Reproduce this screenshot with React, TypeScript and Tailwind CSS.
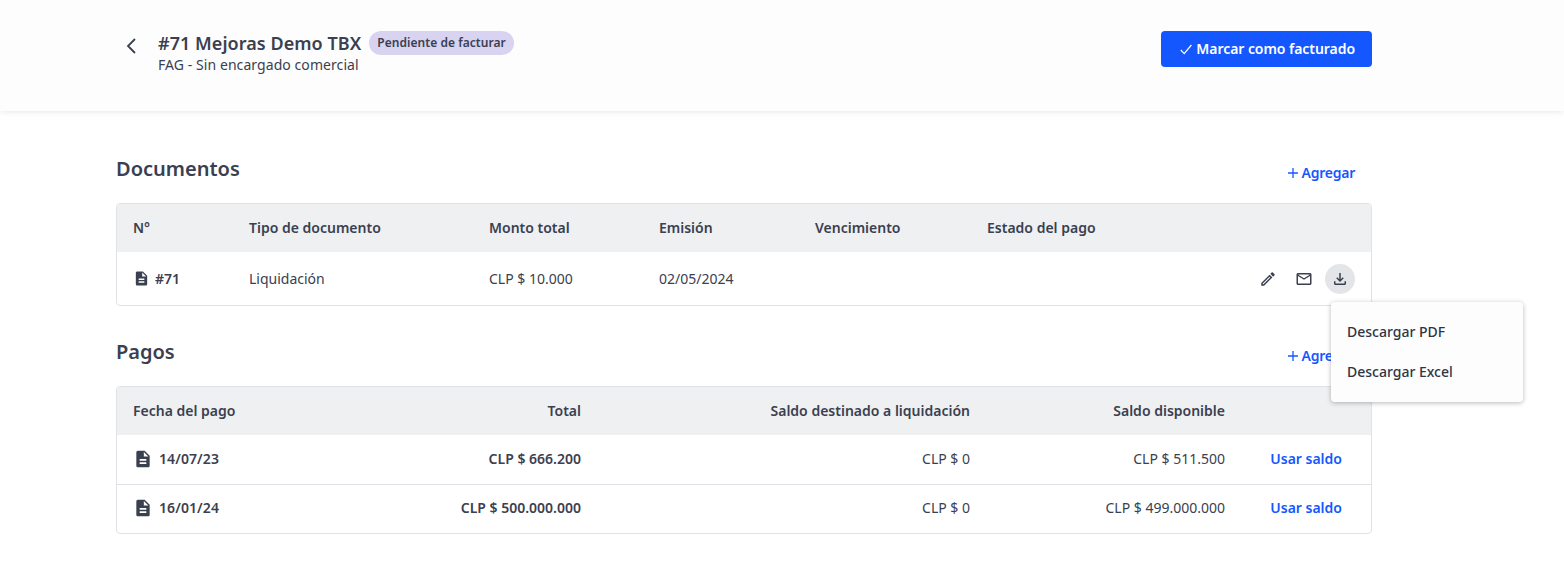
const font = "font-['Noto_Sans',sans-serif]";

const docIcon = "M14 2H6c-1.1 0-1.99.9-1.99 2L4 20c0 1.1.89 2 1.99 2H18c1.1 0 2-.9 2-2V8l-6-6zm2 16H8v-2h8v2zm0-4H8v-2h8v2zm-3-5V3.5L18.5 9H13z";

function Icon({ d, className }: { d: string; className: string }) {
  return (
    <svg viewBox="0 0 24 24" fill="currentColor" className={className}>
      <path d={d} />
    </svg>
  );
}

function AddButton() {
  return (
    <button className="flex items-center gap-[3px] text-sm font-semibold tracking-[-0.25px] text-[#1557ff] mr-[17px]">
      <svg viewBox="0 0 12 12" className="w-[12px] h-[12px]" fill="none" stroke="currentColor" strokeWidth="1.3">
        <path d="M6 1v10M1 6h10" />
      </svg>
      Agregar
    </button>
  );
}

const pagos = [
  { fecha: "14/07/23", total: "CLP $ 666.200", destinado: "CLP $ 0", disponible: "CLP $ 511.500" },
  { fecha: "16/01/24", total: "CLP $ 500.000.000", destinado: "CLP $ 0", disponible: "CLP $ 499.000.000" },
];

export default function App() {
  return (
    <div className={`${font} min-h-[575px] bg-white text-[#3a4050] overflow-hidden`}>
      <header className="h-[111px] bg-[#fdfdfd] shadow-[0_1px_6px_rgba(0,0,0,0.09)] pl-[116px] pr-[192px] pt-[31px] flex justify-between items-start">
        <div className="flex items-start">
          <svg viewBox="0 0 12 18" className="w-[12px] h-[18px] mt-[6px] ml-[9px] mr-[21px]" fill="none" stroke="#3a4050" strokeWidth="1.8">
            <path d="M10 2 L3 9 L10 16" />
          </svg>
          <div>
            <div className="flex items-center gap-[8px] h-[24px]">
              <h1 className="text-lg font-semibold leading-[24px] tracking-[0.05px]">#71 Mejoras Demo TBX</h1>
              <span className="h-[24px] rounded-full bg-[#d8d3f0] px-[8px] text-xs font-semibold leading-[24px] tracking-[0.05px]">Pendiente de facturar</span>
            </div>
            <p className="text-sm leading-[20px] tracking-[0.07px]">FAG - Sin encargado comercial</p>
          </div>
        </div>
        <button className="h-[36px] w-[211px] rounded-[4px] bg-[#1557ff] text-white text-sm font-semibold tracking-[-0.05px] flex items-center justify-end gap-[4px] pr-[17px]">
          <svg viewBox="0 0 12 11" className="w-[12px] h-[11px]" fill="none" stroke="currentColor" strokeWidth="1.2">
            <path d="M0.8 6 L4.2 9.6 L11.4 1" />
          </svg>
          Marcar como facturado
        </button>
      </header>

      <main className="pl-[116px] pr-[192px]">
        <section className="pt-[44px]">
          <div className="flex justify-between items-start h-[48px]">
            <h2 className="text-xl font-semibold leading-[27px]">Documentos</h2>
            <div className="pt-[8px]"><AddButton /></div>
          </div>
          <div className="rounded-[4px] border border-[#e0e2e7] text-sm">
            <div className="grid grid-cols-[116px_240px_170px_156px_172px_1fr] items-center h-[48px] px-[16px] bg-[#eff0f2] font-semibold rounded-t-[4px]">
              <span>N°</span>
              <span>Tipo de documento</span>
              <span>Monto total</span>
              <span>Emisión</span>
              <span>Vencimiento</span>
              <span>Estado del pago</span>
            </div>
            <div className="grid grid-cols-[116px_240px_170px_156px_172px_1fr] items-center h-[53px] px-[16px]">
              <span className="flex items-center gap-[5px] font-semibold">
                <Icon d={docIcon} className="w-[17px] h-[17px]" />
                #71
              </span>
              <span>Liquidación</span>
              <span>CLP $ 10.000</span>
              <span>02/05/2024</span>
              <span />
              <div className="flex items-center justify-end gap-[6px]">
                <button className="w-[30px] h-[30px] flex items-center justify-center">
                  <Icon className="w-[18px] h-[18px]" d="M3 17.25V21h3.75L17.81 9.94l-3.75-3.75L3 17.25zM5.92 19H5v-.92l9.06-9.06.92.92L5.92 19zM20.71 5.63l-2.34-2.34c-.2-.2-.45-.29-.71-.29s-.51.1-.7.29l-1.83 1.83 3.75 3.75 1.83-1.83c.39-.39.39-1.02 0-1.41z" />
                </button>
                <button className="w-[30px] h-[30px] flex items-center justify-center">
                  <Icon className="w-[18px] h-[18px]" d="M22 6c0-1.1-.9-2-2-2H4c-1.1 0-2 .9-2 2v12c0 1.1.9 2 2 2h16c1.1 0 2-.9 2-2V6zm-2 0l-8 5-8-5h16zm0 12H4V8l8 5 8-5v10z" />
                </button>
                <div className="relative">
                  <button className="w-[30px] h-[30px] rounded-full bg-[#e4e5e8] flex items-center justify-center">
                    <Icon className="w-[18px] h-[18px]" d="M18 15v3H6v-3H4v3c0 1.1.9 2 2 2h12c1.1 0 2-.9 2-2v-3h-2zm-1-4l-1.41-1.41L13 12.17V4h-2v8.17L8.41 9.59 7 11l5 5 5-5z" />
                  </button>
                  <div className="absolute left-[6px] top-[38px] z-10 w-[192px] h-[100px] rounded-[4px] bg-[#fdfdfd] shadow-[0_1px_5px_rgba(0,0,0,0.28)] py-[10px] font-medium text-[#2f3445]">
                    <div className="h-[40px] px-[16px] flex items-center">Descargar PDF</div>
                    <div className="h-[40px] px-[16px] flex items-center">Descargar Excel</div>
                  </div>
                </div>
              </div>
            </div>
          </div>
        </section>

        <section className="pt-[32px]">
          <div className="flex justify-between items-start h-[48px]">
            <h2 className="text-xl font-semibold leading-[27px]">Pagos</h2>
            <div className="pt-[8px]"><AddButton /></div>
          </div>
          <div className="rounded-[4px] border border-[#e0e2e7] text-sm">
            <div className="grid grid-cols-[149px_299px_389px_255px_1fr] items-center h-[48px] px-[16px] bg-[#eff0f2] font-semibold rounded-t-[4px]">
              <span>Fecha del pago</span>
              <span className="text-right">Total</span>
              <span className="text-right">Saldo destinado a liquidación</span>
              <span className="text-right">Saldo disponible</span>
              <span />
            </div>
            {pagos.map((p, i) => (
              <div
                key={p.fecha}
                className={`grid grid-cols-[149px_299px_389px_255px_1fr] items-center h-[49px] px-[16px] pb-[2px] ${i > 0 ? "border-t border-[#e0e2e7]" : ""}`}
              >
                <span className="flex items-center gap-[6px] font-semibold tracking-[0.1px]">
                  <Icon d={docIcon} className="w-[20px] h-[20px]" />
                  {p.fecha}
                </span>
                <span className="text-right font-semibold">{p.total}</span>
                <span className="text-right">{p.destinado}</span>
                <span className="text-right">{p.disponible}</span>
                <span className="text-right font-semibold text-[#1557ff] pr-[13px]">Usar saldo</span>
              </div>
            ))}
          </div>
        </section>
      </main>
    </div>
  );
}
